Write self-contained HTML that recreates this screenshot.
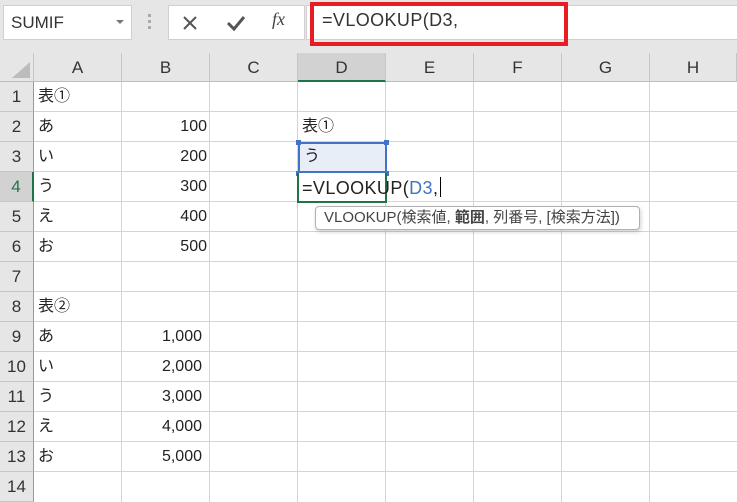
<!DOCTYPE html>
<html><head><meta charset="utf-8"><style>
*{margin:0;padding:0;box-sizing:border-box}
body{width:737px;height:502px;overflow:hidden;background:#fff;position:relative;font-family:"Liberation Sans","Noto Sans CJK JP",sans-serif;color:#222}
.a{position:absolute}
.top{left:0;top:0;width:737px;height:53px;background:#e6e6e6}
.hc{position:absolute;top:53px;height:29px;background:#e6e6e6;border-right:1px solid #c6c6c6;border-bottom:1px solid #bdbdbd;text-align:center;font-size:17px;line-height:29px;color:#333}
.rh{position:absolute;left:0;width:34px;height:30px;background:#e6e6e6;border-bottom:1px solid #c6c6c6;border-right:1px solid #9a9a9a;text-align:center;font-size:17px;line-height:30px;color:#333}
.vl{position:absolute;top:82px;width:1px;height:420px;background:#d4d4d4}
.hl{position:absolute;left:34px;width:703px;height:1px;background:#d4d4d4}
.t{position:absolute;font-size:16px;line-height:30px;color:#222}
.r{text-align:right;width:86px}
</style></head><body>
<div class="a top"></div>
<div class="a" style="left:3px;top:5px;width:129px;height:35px;background:#fff;border:1px solid #d0d0d0;font-size:17px;line-height:33px;padding-left:7px;color:#333">SUMIF</div>
<div class="a" style="left:116px;top:20px;width:0;height:0;border-left:4px solid transparent;border-right:4px solid transparent;border-top:4px solid #777"></div>
<div class="a" style="left:148px;top:14px;width:3px;height:3px;background:#aaa;box-shadow:0 6px 0 #aaa,0 12px 0 #aaa"></div>
<div class="a" style="left:168px;top:5px;width:137px;height:35px;background:#fff;border:1px solid #d0d0d0"></div>
<svg class="a" style="left:181px;top:14px" width="18" height="18"><path d="M3 3L15 15M15 3L3 15" stroke="#555" stroke-width="2"/></svg>
<svg class="a" style="left:226px;top:14px" width="20" height="18"><path d="M2 9L8 15L18 3" stroke="#555" stroke-width="3" fill="none"/></svg>
<div class="a" style="left:272px;top:9px;font-family:'Liberation Serif',serif;font-style:italic;font-size:18px;color:#444">fx</div>
<div class="a" style="left:306px;top:5px;width:431px;height:35px;background:#fff;border:1px solid #d0d0d0;border-right:none"></div>
<div class="a" style="left:310px;top:2px;width:258px;height:44px;border:4px solid #e81c24"></div>
<div class="a" style="left:322px;top:10px;font-size:18px;color:#333;letter-spacing:0.4px">=VLOOKUP(D3,</div>

<div class="hc" style="left:0;width:34px"></div>
<svg class="a" style="left:8px;top:60px" width="24" height="20"><path d="M22 2L22 18L4 18Z" fill="#bcbcbc"/></svg>
<div class="hc" style="left:34px;width:88px">A</div>
<div class="hc" style="left:122px;width:88px">B</div>
<div class="hc" style="left:210px;width:88px">C</div>
<div class="hc" style="left:298px;width:88px;background:#d2d2d2;border-bottom:2px solid #217346">D</div>
<div class="hc" style="left:386px;width:88px">E</div>
<div class="hc" style="left:474px;width:88px">F</div>
<div class="hc" style="left:562px;width:88px">G</div>
<div class="hc" style="left:650px;width:87px">H</div>

<div class="rh" style="top:82px">1</div>
<div class="rh" style="top:112px">2</div>
<div class="rh" style="top:142px">3</div>
<div class="rh" style="top:172px;background:#d2d2d2;color:#217346;border-right:2px solid #217346">4</div>
<div class="rh" style="top:202px">5</div>
<div class="rh" style="top:232px">6</div>
<div class="rh" style="top:262px">7</div>
<div class="rh" style="top:292px">8</div>
<div class="rh" style="top:322px">9</div>
<div class="rh" style="top:352px">10</div>
<div class="rh" style="top:382px">11</div>
<div class="rh" style="top:412px">12</div>
<div class="rh" style="top:442px">13</div>
<div class="rh" style="top:472px">14</div>

<div class="vl" style="left:121px"></div><div class="vl" style="left:209px"></div><div class="vl" style="left:297px"></div><div class="vl" style="left:385px"></div><div class="vl" style="left:473px"></div><div class="vl" style="left:561px"></div><div class="vl" style="left:649px"></div>
<div class="hl" style="top:111px"></div><div class="hl" style="top:141px"></div><div class="hl" style="top:171px"></div><div class="hl" style="top:201px"></div><div class="hl" style="top:231px"></div><div class="hl" style="top:261px"></div><div class="hl" style="top:291px"></div><div class="hl" style="top:321px"></div><div class="hl" style="top:351px"></div><div class="hl" style="top:381px"></div><div class="hl" style="top:411px"></div><div class="hl" style="top:441px"></div><div class="hl" style="top:471px"></div>

<div class="t" style="left:38px;top:82px">表①</div>
<div class="t" style="left:38px;top:112px">あ</div><div class="t r" style="left:121px;top:112px">100</div>
<div class="t" style="left:38px;top:142px">い</div><div class="t r" style="left:121px;top:142px">200</div>
<div class="t" style="left:38px;top:172px">う</div><div class="t r" style="left:121px;top:172px">300</div>
<div class="t" style="left:38px;top:202px">え</div><div class="t r" style="left:121px;top:202px">400</div>
<div class="t" style="left:38px;top:232px">お</div><div class="t r" style="left:121px;top:232px">500</div>
<div class="t" style="left:38px;top:292px">表②</div>
<div class="t" style="left:38px;top:322px">あ</div><div class="t r" style="left:116px;top:322px">1,000</div>
<div class="t" style="left:38px;top:352px">い</div><div class="t r" style="left:116px;top:352px">2,000</div>
<div class="t" style="left:38px;top:382px">う</div><div class="t r" style="left:116px;top:382px">3,000</div>
<div class="t" style="left:38px;top:412px">え</div><div class="t r" style="left:116px;top:412px">4,000</div>
<div class="t" style="left:38px;top:442px">お</div><div class="t r" style="left:116px;top:442px">5,000</div>

<div class="t" style="left:302px;top:112px">表①</div>
<div class="a" style="left:298px;top:142px;width:89px;height:31px;background:#e8eef8;border:2px solid #4472c4"></div>
<div class="t" style="left:304px;top:142px">う</div>
<div class="a" style="left:296px;top:140px;width:5px;height:5px;background:#4472c4"></div>
<div class="a" style="left:384px;top:140px;width:5px;height:5px;background:#4472c4"></div>
<div class="a" style="left:296px;top:171px;width:5px;height:5px;background:#4472c4"></div>
<div class="a" style="left:384px;top:171px;width:5px;height:5px;background:#4472c4"></div>
<div class="a" style="left:297px;top:173px;width:90px;height:30px;border:2px solid #217346;border-top:none;background:#fff"></div>
<div class="a" style="left:302px;top:174px;font-size:18px;line-height:28px;color:#222;white-space:nowrap;letter-spacing:0.4px">=VLOOKUP(<span style="color:#4472c4">D3</span>,<span style="display:inline-block;width:1px;height:20px;background:#000;vertical-align:-3px;margin-left:2px"></span></div>
<div class="a" style="left:315px;top:206px;width:325px;height:24px;background:#fff;border:1px solid #b0b0b0;border-radius:4px;box-shadow:1px 2px 4px rgba(0,0,0,.18);font-size:15px;line-height:22px;padding-left:8px;color:#444;white-space:nowrap">VLOOKUP(検索値, <b>範囲</b>, 列番号, [検索方法])</div>
</body></html>
